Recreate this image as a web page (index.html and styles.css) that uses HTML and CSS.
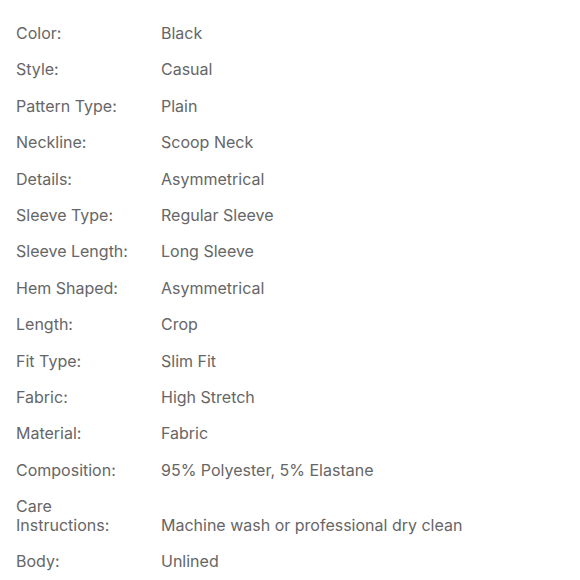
FILE: index.html
```html
<!DOCTYPE html>
<html>
<head>
<meta charset="utf-8">
<link rel="stylesheet" href="styles.css">
</head>
<body>
<dl class="specs">
  <div class="row"><dt>Color:</dt><dd>Black</dd></div>
  <div class="row"><dt>Style:</dt><dd>Casual</dd></div>
  <div class="row"><dt>Pattern Type:</dt><dd>Plain</dd></div>
  <div class="row"><dt>Neckline:</dt><dd>Scoop Neck</dd></div>
  <div class="row"><dt>Details:</dt><dd>Asymmetrical</dd></div>
  <div class="row"><dt>Sleeve Type:</dt><dd>Regular Sleeve</dd></div>
  <div class="row"><dt>Sleeve Length:</dt><dd>Long Sleeve</dd></div>
  <div class="row"><dt>Hem Shaped:</dt><dd>Asymmetrical</dd></div>
  <div class="row"><dt>Length:</dt><dd>Crop</dd></div>
  <div class="row"><dt>Fit Type:</dt><dd>Slim Fit</dd></div>
  <div class="row"><dt>Fabric:</dt><dd>High Stretch</dd></div>
  <div class="row"><dt>Material:</dt><dd>Fabric</dd></div>
  <div class="row"><dt>Composition:</dt><dd>95% Polyester, 5% Elastane</dd></div>
  <div class="row"><dt class="wrap">Care Instructions:</dt><dd>Machine wash or professional dry clean</dd></div>
  <div class="row"><dt>Body:</dt><dd>Unlined</dd></div>
</dl>
</body>
</html>
```
FILE: styles.css
```css
html, body {
  margin: 0;
  padding: 0;
  background: #ffffff;
}
body {
  font-family: Inter, "Noto Sans", "Liberation Sans", sans-serif;
  font-size: 16px;
  color: #666666;
}
.specs {
  margin: 0;
  padding: 15px 16px 0 16px;
}
.row {
  display: grid;
  grid-template-columns: 145px 1fr;
  align-items: end;
  padding: 9px 0;
  line-height: 18.4px;
}
.row dt, .row dd {
  margin: 0;
}
.wrap {
  width: 110px;
}
```
